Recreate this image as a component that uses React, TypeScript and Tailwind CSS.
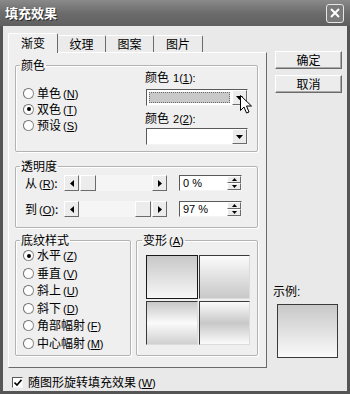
import React from "react";

const raised =
  "border border-t-white border-l-white border-r-[#6b6b6b] border-b-[#6b6b6b] bg-[#ececec]";
const sunken =
  "border border-t-[#5a5a5a] border-l-[#5a5a5a] border-r-[#f4f4f4] border-b-[#f4f4f4]";
const latin = "font-['Liberation_Sans',sans-serif]";

function Mn({ k }: { k: string }) {
  return (
    <span className={`${latin} text-[11px] ml-[2px]`}>
      (<span className="underline">{k}</span>)
    </span>
  );
}

function Radio({ checked }: { checked?: boolean }) {
  return (
    <span className="w-[11px] h-[11px] rounded-full bg-white border border-[#8c8c8c] border-t-[#6f6f6f] border-l-[#6f6f6f] flex items-center justify-center shrink-0">
      {checked && <span className="w-[4px] h-[4px] rounded-full bg-black" />}
    </span>
  );
}

function RadioRow({ label, k, checked, h }: { label: string; k: string; checked?: boolean; h: string }) {
  return (
    <div className={`flex items-center gap-[3px] ${h}`}>
      <Radio checked={checked} />
      <span className="leading-[14px]">
        {label}
        <Mn k={k} />
      </span>
    </div>
  );
}

function Tri({ dir }: { dir: "down" | "left" | "right" | "up" }) {
  const paths: Record<string, string> = {
    down: "M0 0 L7 0 L3.5 4 Z",
    up: "M0 4 L7 4 L3.5 0 Z",
    left: "M4 0 L4 7 L0 3.5 Z",
    right: "M0 0 L0 7 L4 3.5 Z",
  };
  const vb = dir === "down" || dir === "up" ? "0 0 7 4" : "0 0 4 7";
  const w = dir === "down" || dir === "up" ? 7 : 4;
  const h = dir === "down" || dir === "up" ? 4 : 7;
  return (
    <svg width={w} height={h} viewBox={vb}>
      <path d={paths[dir]} fill="#000" />
    </svg>
  );
}

function Combo({ swatch }: { swatch: string }) {
  return (
    <div className={`w-[102px] h-[17px] ${sunken} bg-white flex items-stretch`}>
      <div className="flex-1 p-[1px] flex">
        <div className={`flex-1 ${swatch}`} />
      </div>
      <div className={`w-[15px] ${raised} flex items-center justify-center`}>
        <Tri dir="down" />
      </div>
    </div>
  );
}

function Slider({ end }: { end?: boolean }) {
  return (
    <div className="flex h-[16px] w-[103px]">
      <div className={`w-[15px] ${raised} flex items-center justify-center`}>
        <Tri dir="left" />
      </div>
      <div className={`flex-1 bg-[#f5f5f5] flex ${end ? "justify-end pr-[1px]" : "justify-start pl-[1px]"}`}>
        <div className={`w-[16px] ${raised}`} />
      </div>
      <div className={`w-[15px] ${raised} flex items-center justify-center`}>
        <Tri dir="right" />
      </div>
    </div>
  );
}

function Spin({ value }: { value: string }) {
  return (
    <div className={`w-[63px] h-[16px] ${sunken} bg-white flex items-stretch`}>
      <div className={`flex-1 ${latin} text-[11px] leading-[14px] pl-[3px]`}>{value}</div>
      <div className="w-[14px] flex flex-col">
        <div className={`flex-1 ${raised} flex items-center justify-center`}>
          <svg width="5" height="3" viewBox="0 0 5 3"><path d="M0 3 L5 3 L2.5 0 Z" fill="#000" /></svg>
        </div>
        <div className={`flex-1 ${raised} flex items-center justify-center`}>
          <svg width="5" height="3" viewBox="0 0 5 3"><path d="M0 0 L5 0 L2.5 3 Z" fill="#000" /></svg>
        </div>
      </div>
    </div>
  );
}

const fs =
  "border border-[#b3b3b3] rounded-[2px] shadow-[1px_1px_0_#ffffff,inset_1px_1px_0_#ffffff]";

function Tab({ label, selected, w }: { label: string; selected?: boolean; w: string }) {
  if (selected) {
    return (
      <div
        className={`${w} h-[20px] -mb-[1px] relative z-10 bg-[#efefef] border-t border-l border-r border-t-white border-l-white border-r-[#6b6b6b] rounded-t-[2px] flex items-center justify-center leading-[14px] pb-[2px]`}
      >
        {label}
      </div>
    );
  }
  return (
    <div
      className={`${w} h-[17px] bg-[#ebebeb] border-t border-r border-t-white border-r-[#6b6b6b] rounded-t-[2px] flex items-center justify-center leading-[14px]`}
    >
      {label}
    </div>
  );
}

export default function App() {
  return (
    <div className="w-[350px] h-[394px] bg-[#555555] flex flex-col overflow-hidden font-['Noto_Sans_CJK_SC','Liberation_Sans',sans-serif] text-[12px] text-black">
      {/* title bar */}
      <div className="h-[26px] shrink-0 flex items-center justify-between pl-[5px] pr-[6px] bg-linear-to-b from-[#8a8a8a] via-[#6c6c6c] to-[#5f5f5f]">
        <span className="text-white font-bold text-[13px] leading-[16px] [text-shadow:1px_1px_0_#2a2a2a]">
          填充效果
        </span>
        <div className="w-[18px] h-[19px] rounded-[3px] border border-[#e6e6e6] bg-[#7a7a7a] flex items-center justify-center">
          <svg width="10" height="10" viewBox="0 0 10 10">
            <path d="M1 1 L9 9 M9 1 L1 9" stroke="#ffffff" strokeWidth="2" />
          </svg>
        </div>
      </div>

      {/* client */}
      <div className="flex-1 mx-[3px] mb-[3px] bg-[#e9e9e9] flex flex-col">
        <div className="flex pt-[7px] pl-[5px]">
          {/* left column */}
          <div className="w-[259px] flex flex-col">
            <div className="h-[19px] flex items-end">
              <Tab label="渐变" selected w="w-[50px]" />
              <Tab label="纹理" w="w-[48px]" />
              <Tab label="图案" w="w-[48px]" />
              <Tab label="图片" w="w-[49px]" />
            </div>
            <div className="h-[316px] bg-[#efefef] border border-t-white border-l-white border-r-[#6b6b6b] border-b-[#6b6b6b] pl-[6px] pr-[8px] pt-[6px] flex flex-col">
              {/* 颜色 */}
              <fieldset className={`${fs} pb-[6px]`}>
                <legend className="ml-[4px] px-[1px] leading-[12px]">颜色</legend>
                <div className="flex">
                  <div className="w-[129px] pl-[7px] pt-[14px] flex flex-col">
                    <RadioRow label="单色" k="N" h="h-[16px]" />
                    <RadioRow label="双色" k="T" checked h="h-[16px]" />
                    <RadioRow label="预设" k="S" h="h-[16px]" />
                  </div>
                  <div className="flex flex-col -mt-[1px]">
                    <div className="leading-[14px]">
                      颜色
                      <span className={`${latin} text-[11px] ml-[4px]`}>
                        1(<span className="underline">1</span>):
                      </span>
                    </div>
                    <div className="mt-[4px] ml-[1px] relative">
                      <Combo swatch="bg-[#c8c8c8] outline-1 outline-dotted outline-[#6a6a6a] -outline-offset-1 m-[1px]" />
                      <svg
                        className="absolute left-[94px] top-[6px]"
                        width="12"
                        height="19"
                        viewBox="0 0 12 19"
                      >
                        <path
                          d="M0.5 0.5 L0.5 15.5 L4 12 L6.5 18 L9 17 L6.5 11 L11.5 11 Z"
                          fill="#ffffff"
                          stroke="#000000"
                          strokeWidth="1"
                        />
                      </svg>
                    </div>
                    <div className="leading-[14px] mt-[5px]">
                      颜色
                      <span className={`${latin} text-[11px] ml-[4px]`}>
                        2(<span className="underline">2</span>):
                      </span>
                    </div>
                    <div className="mt-[2px] ml-[1px]">
                      <Combo swatch="bg-white" />
                    </div>
                  </div>
                </div>
              </fieldset>

              {/* 透明度 */}
              <fieldset className={`${fs} mt-[8px] pb-[10px]`}>
                <legend className="ml-[4px] px-[1px] leading-[12px]">透明度</legend>
                <div className="flex items-center h-[16px] mt-[3px] pl-[9px]">
                  <span className="w-[39px] leading-[14px]">
                    从<Mn k="R" />:
                  </span>
                  <Slider />
                  <div className="ml-[12px]">
                    <Spin value="0 %" />
                  </div>
                </div>
                <div className="flex items-center h-[16px] mt-[10px] pl-[9px]">
                  <span className="w-[39px] leading-[14px]">
                    到<Mn k="O" />:
                  </span>
                  <Slider end />
                  <div className="ml-[12px]">
                    <Spin value="97 %" />
                  </div>
                </div>
              </fieldset>

              {/* bottom groups */}
              <div className="flex gap-[5px] mt-[6px]">
                <fieldset className={`${fs} w-[116px] pb-[3px]`}>
                  <legend className="ml-[4px] px-[1px] leading-[12px]">底纹样式</legend>
                  <div className="pl-[7px] pt-[1px] flex flex-col">
                    <RadioRow label="水平" k="Z" checked h="h-[17.5px]" />
                    <RadioRow label="垂直" k="V" h="h-[17.5px]" />
                    <RadioRow label="斜上" k="U" h="h-[17.5px]" />
                    <RadioRow label="斜下" k="D" h="h-[17.5px]" />
                    <RadioRow label="角部幅射" k="F" h="h-[17.5px]" />
                    <RadioRow label="中心幅射" k="M" h="h-[17.5px]" />
                  </div>
                </fieldset>
                <fieldset className={`${fs} flex-1`}>
                  <legend className="ml-[5px] px-[1px] leading-[12px]">
                    变形<Mn k="A" />
                  </legend>
                  <div className="ml-[9px] mt-[8px] grid grid-cols-[52px_51px] grid-rows-[44px_44px] gap-x-[1px] gap-y-[2px]">
                    <div className="border border-[#1a1a1a] bg-linear-to-b from-[#c8c8c8] to-[#f7f7f7]" />
                    <div className="border border-t-[#3a3a3a] border-l-[#3a3a3a] border-r-[#dcdcdc] border-b-[#dcdcdc] bg-linear-to-b from-[#fbfbfb] to-[#c8c8c8]" />
                    <div className="border border-t-[#3a3a3a] border-l-[#3a3a3a] border-r-[#dcdcdc] border-b-[#dcdcdc] bg-linear-to-b from-[#c8c8c8] via-[#fbfbfb] to-[#d0d0d0]" />
                    <div className="border border-t-[#3a3a3a] border-l-[#3a3a3a] border-r-[#dcdcdc] border-b-[#dcdcdc] bg-linear-to-b from-[#fbfbfb] via-[#c8c8c8] to-[#fbfbfb]" />
                  </div>
                </fieldset>
              </div>
            </div>
          </div>

          {/* right column */}
          <div className="ml-[8px] w-[67px] flex flex-col pt-[18px]">
            <div className={`h-[18px] ${raised} shadow-[inset_-1px_-1px_0_#a9a9a9] flex items-center justify-center leading-[14px]`}>
              确定
            </div>
            <div className={`h-[18px] mt-[6px] ${raised} shadow-[inset_-1px_-1px_0_#a9a9a9] flex items-center justify-center leading-[14px]`}>
              取消
            </div>
            <div className="mt-[191px] -ml-[2px] leading-[14px]">
              示例<span className={latin}>:</span>
            </div>
            <div className="mt-[5px] ml-[2px] w-[61px] h-[54px] border border-[#3a3a3a] bg-linear-to-b from-[#c8c8c8] to-[#fafafa]" />
          </div>
        </div>

        {/* checkbox row */}
        <div className="flex items-center mt-[9px] pl-[9px] h-[11px]">
          <span className={`w-[11px] h-[11px] ${sunken} bg-white flex items-center justify-center`}>
            <svg width="8" height="7" viewBox="0 0 8 7">
              <path d="M0.5 3.5 L3 6 L7.5 0.8" stroke="#000" strokeWidth="1.6" fill="none" />
            </svg>
          </span>
          <span className="ml-[5px] leading-[14px]">
            随图形旋转填充效果<Mn k="W" />
          </span>
        </div>
      </div>
    </div>
  );
}
